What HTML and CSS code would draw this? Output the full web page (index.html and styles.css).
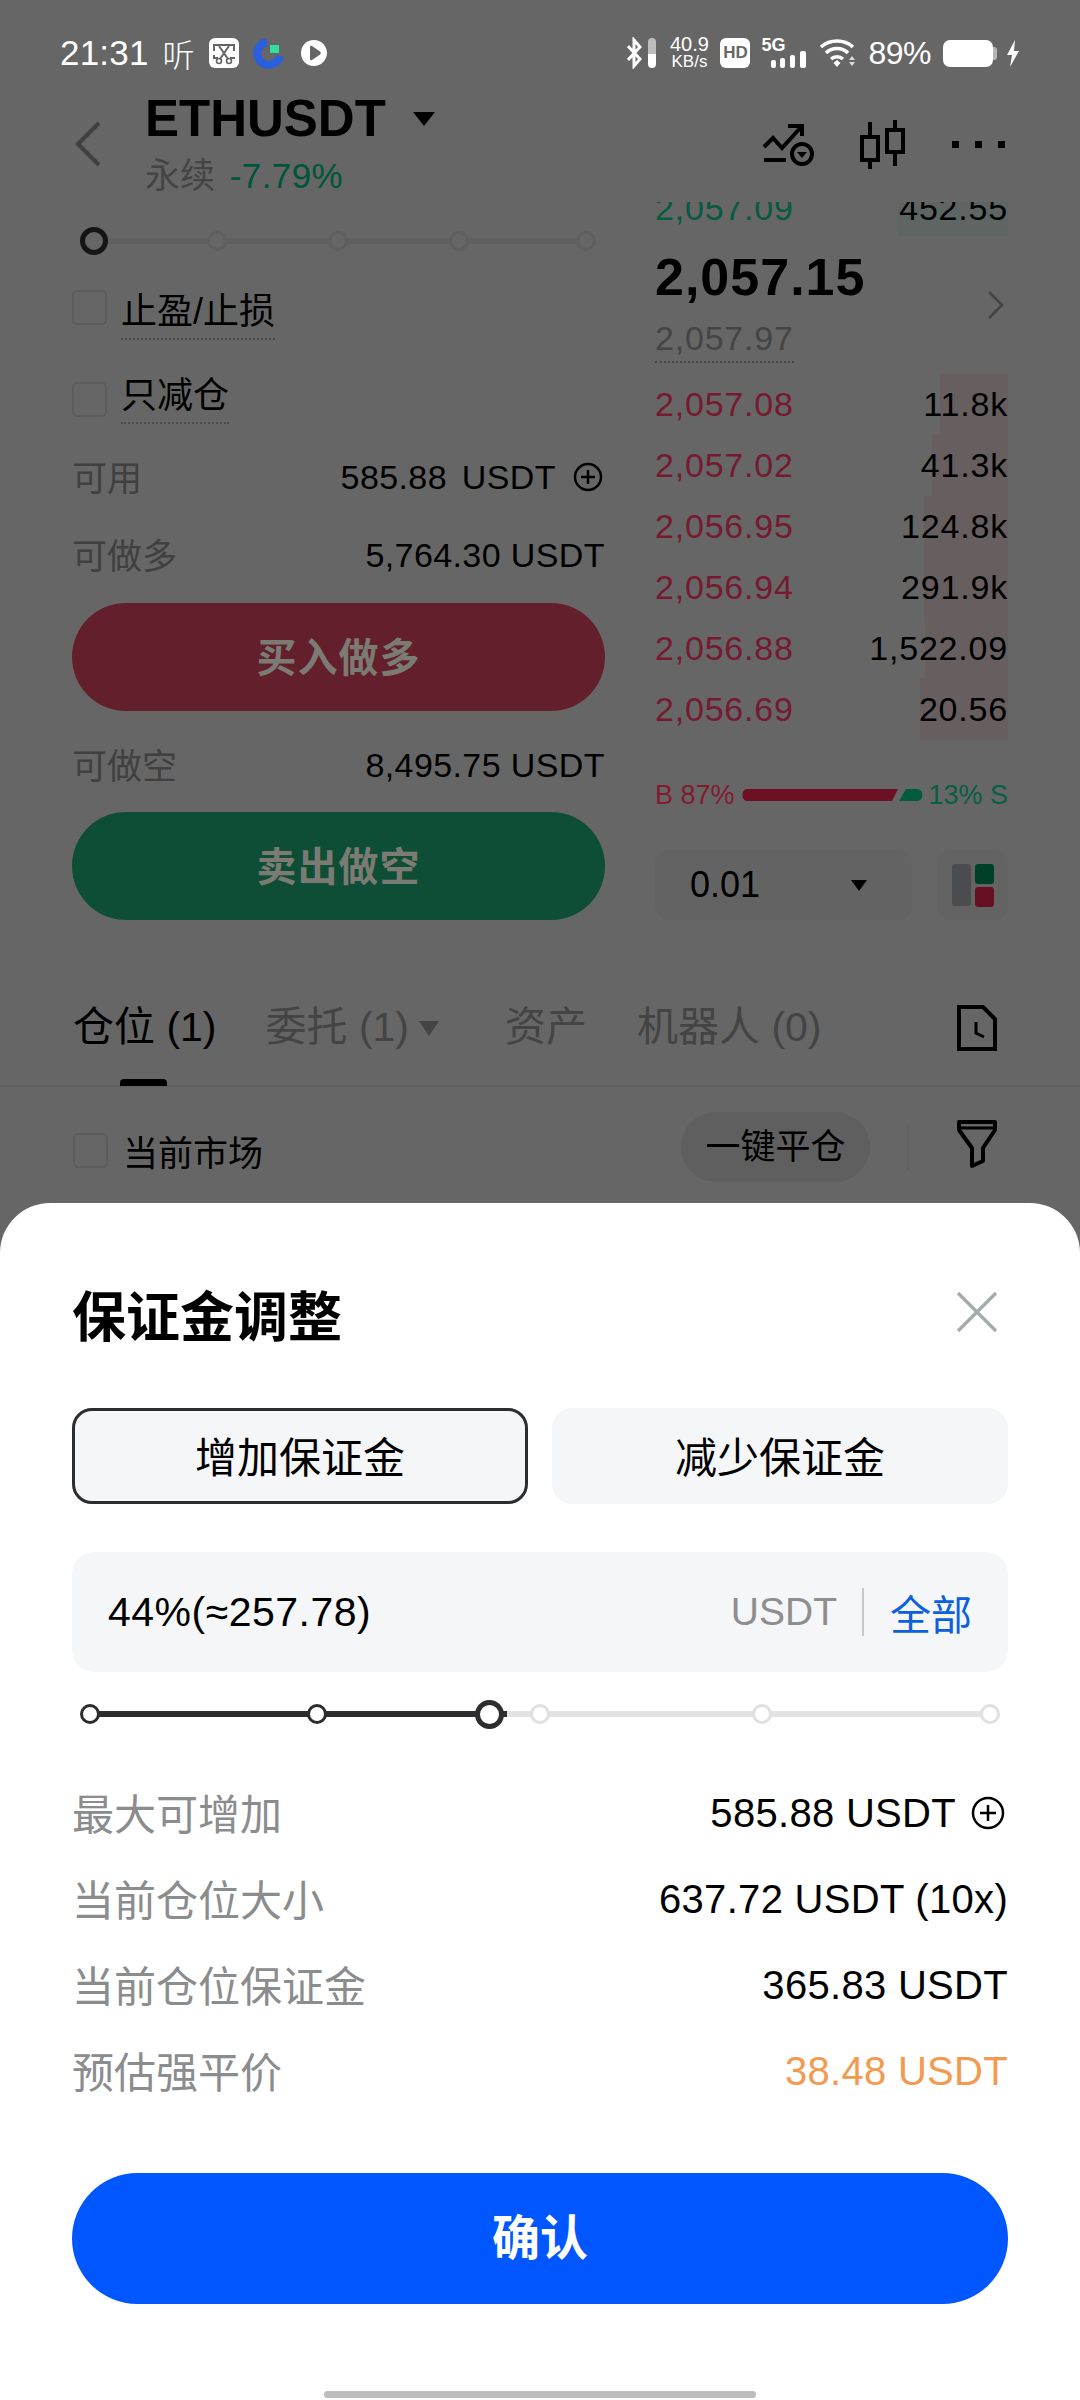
FILE: index.html
```html
<!DOCTYPE html>
<html lang="zh">
<head>
   <meta charset="utf-8" />
   <title>保证金调整</title>
   <link rel="stylesheet" href="styles.css">
</head>
<body>
<div class="page">
   <div class="status-bar">
       <span class="clock">21:31</span>
       <span class="listen">听</span>
       <svg class="st-icon st-clip" width="30" height="30" viewBox="0 0 30 30">
           <rect width="30" height="30" rx="6" fill="#fff"/>
           <path d="M5 13V7H25V13M25 19V20H21M9 20H5V17" fill="none" stroke="#666" stroke-width="2"/>
           <path d="M10 8L19 21M20 8L11 21" fill="none" stroke="#666" stroke-width="2"/>
           <circle cx="10" cy="23" r="2.5" fill="none" stroke="#666" stroke-width="1.6"/>
           <circle cx="20" cy="23" r="2.5" fill="none" stroke="#666" stroke-width="1.6"/>
       </svg>
       <svg class="st-icon st-gauge" width="32" height="32" viewBox="0 0 32 32">
           <path d="M14 5A11.500 11.500 0 1 0 27 19" fill="none" stroke="#2a5fe0" stroke-width="8"/>
           <rect x="17" y="8" width="9" height="8" fill="#2fe0a0"/>
       </svg>
       <svg class="st-icon st-play" width="28" height="28" viewBox="0 0 28 28">
           <path d="M14 1C22 1 27 8 27 14C27 20 22 27 14 27C6 27 1 21 1 14C1 7 6 1 14 1Z" fill="#fff"/>
           <path d="M10 8C10 7 11 6.500 12 7L20 12.500C21 13.400 21 14.600 20 15.500L12 21C11 21.500 10 21 10 20Z" fill="#666"/>
       </svg>

       <div class="status-right">
           <svg width="15" height="32" viewBox="0 0 15 32">
               <path d="M1 9L13 22L7 29V3L13 10L1 23" fill="none" stroke="#fff" stroke-width="3"/>
           </svg>
           <span class="bt-level"></span>
           <div class="speed"><span>40.9</span><span class="speed-unit">KB/s</span></div>
           <span class="hd">HD</span>
           <div class="net">
               <span class="net-label">5G</span>
               <svg width="35" height="17" viewBox="0 0 35 17">
                   <rect x="0" y="9" width="5" height="8" rx="2" fill="#fff"/>
                   <rect x="9" y="7" width="5" height="10" rx="2" fill="#fff"/>
                   <rect x="19" y="4" width="5" height="13" rx="2" fill="#fff"/>
                   <rect x="29" y="0" width="6" height="17" rx="2" fill="#fff"/>
               </svg>
           </div>
           <svg class="st-wifi" width="38" height="30" viewBox="0 0 38 30">
               <path d="M2 9C11 1 25 1 34 9M7 15C13 9 23 9 29 15M12 21C15.500 18 20.500 18 24 21" fill="none" stroke="#fff" stroke-width="3.600"/>
               <path d="M14.500 25L18 22L21.500 25L18 29Z" fill="#fff"/>
               <path d="M30 22L33 18L36 22ZM30 24L33 28L36 24Z" fill="#ddd"/>
           </svg>
           <span class="battery-pct">89%</span>
           <div class="battery"><span class="battery-cap"></span></div>
           <svg class="st-bolt" width="14" height="27" viewBox="0 0 14 27">
               <path d="M9 0L1 15H6L4 27L13 11H8Z" fill="#fff"/>
           </svg>
       </div>
   </div>

   <div class="top-bar">
       <svg class="back" width="26" height="46" viewBox="0 0 26 46">
           <path d="M24 2L3 23L24 44" fill="none" stroke="#3f3f3f" stroke-width="4"/>
       </svg>
       <div class="symbol-box">
           <div class="symbol">ETHUSDT <span class="caret caret-symbol"></span></div>
           <div class="symbol-sub">永续 <span class="change">-7.79%</span></div>
       </div>
       <div class="top-icons">
           <svg width="52" height="50" viewBox="0 0 52 50">
               <path d="M2 27L11 18L20 28L40 6M26 6H40V16" fill="none" stroke="#000" stroke-width="4"/>
               <path d="M2 40H24" stroke="#000" stroke-width="4"/>
               <circle cx="40" cy="34" r="10" fill="none" stroke="#000" stroke-width="4"/>
               <path d="M35 32H45L40 38Z" fill="#000"/>
           </svg>
           <svg width="46" height="50" viewBox="0 0 46 50">
               <path d="M10 2V49M35 0V46" stroke="#000" stroke-width="4"/>
               <rect x="2" y="17" width="16" height="23" fill="#666" stroke="#000" stroke-width="4"/>
               <rect x="27" y="10" width="16" height="22" fill="#666" stroke="#000" stroke-width="4"/>
           </svg>
           <div class="dots"><i></i><i></i><i></i></div>
       </div>
   </div>

   <div class="trade">
       <div class="order-form">
           <div class="slider dim">
               <div class="track"></div>
               <span class="knob big" style="left:22px"></span>
               <span class="knob" style="left:145px"></span>
               <span class="knob" style="left:266px"></span>
               <span class="knob" style="left:387px"></span>
               <span class="knob" style="left:514px"></span>
           </div>
           <div class="check-row first">
               <span class="box"></span>
               <span class="dotted">止盈/止损</span>
           </div>
           <div class="check-row second">
               <span class="box low"></span>
               <span class="dotted">只减仓</span>
           </div>
           <div class="info-row avail">
               <span class="muted">可用</span>
               <span class="info-value wide">
                   <span>585.88 USDT</span>
                   <svg class="plus" width="30" height="30" viewBox="0 0 30 30">
                       <circle cx="15" cy="15" r="13" fill="none" stroke="#000" stroke-width="2.500"/>
                       <path d="M15 8V22M8 15H22" stroke="#000" stroke-width="2.500"/>
                   </svg>
               </span>
           </div>
           <div class="info-row long">
               <span class="muted">可做多</span>
               <span class="info-value">5,764.30 USDT</span>
           </div>
           <div class="trade-btn buy">买入做多</div>
           <div class="info-row short">
               <span class="muted">可做空</span>
               <span class="info-value">8,495.75 USDT</span>
           </div>
           <div class="trade-btn sell">卖出做空</div>
       </div>

       <div class="book">
           <div class="clip-row">
               <div class="book-row ask-row">
                   <span class="depth depth-ask" style="width:110px"></span>
                   <span class="green">2,057.09</span><span>452.55</span>
               </div>
           </div>
           <div class="mid">
               <div>
                   <div class="mid-price">2,057.15</div>
                   <div class="mark-price"><span>2,057.97</span></div>
               </div>
               <svg width="18" height="30" viewBox="0 0 18 30">
                   <path d="M2 2L15 15L2 28" fill="none" stroke="#454545" stroke-width="2.600"/>
               </svg>
           </div>
           <div class="book-row"><span class="depth" style="width:68px"></span><span class="red">2,057.08</span><span>11.8k</span></div>
           <div class="book-row"><span class="depth" style="width:76px"></span><span class="red">2,057.02</span><span>41.3k</span></div>
           <div class="book-row"><span class="depth" style="width:84px"></span><span class="red">2,056.95</span><span>124.8k</span></div>
           <div class="book-row"><span class="depth" style="width:84px"></span><span class="red">2,056.94</span><span>291.9k</span></div>
           <div class="book-row"><span class="depth" style="width:83px"></span><span class="red">2,056.88</span><span>1,522.09</span></div>
           <div class="book-row"><span class="depth" style="width:88px"></span><span class="red">2,056.69</span><span>20.56</span></div>
           <div class="ratio">
               <span class="ratio-b">B 87%</span>
               <svg width="182" height="14" viewBox="0 0 182 14">
                   <path d="M6 1H157L151 13H6C0 13 0 1 6 1Z" fill="#6e1023"/>
                   <path d="M165 1H176C183 1 183 13 176 13H158Z" fill="#005c3d"/>
               </svg>
               <span class="ratio-s">13% S</span>
           </div>
           <div class="book-tools">
               <div class="depth-select"><span>0.01</span><span class="caret caret-small"></span></div>
               <div class="layout-btn">
                   <span class="lay-gray"></span>
                   <div class="lay-col"><span class="lay-green"></span><span class="lay-red"></span></div>
               </div>
           </div>
       </div>
   </div>

   <div class="tabs">
       <span class="tab active">仓位 (1)</span>
       <span class="tab tab-orders">委托 (1)</span><span class="caret caret-tab"></span>
       <span class="tab tab-assets">资产</span>
       <span class="tab tab-bots">机器人 (0)</span>
       <svg class="doc" width="42" height="48" viewBox="0 0 42 48">
           <path d="M3 3H27L39 15V45H3Z" fill="none" stroke="#000" stroke-width="4"/>
           <path d="M20 18V29L28 33" fill="none" stroke="#000" stroke-width="3"/>
       </svg>
   </div>
   <div class="filter-row">
       <div class="market-check">
           <span class="box"></span>
           <span>当前市场</span>
       </div>
       <div class="close-all">一键平仓</div>
       <span class="filter-sep"></span>
       <svg class="funnel" width="42" height="50" viewBox="0 0 42 50">
           <path d="M3 3H39V11L27 29V42L16 47V29L3 11Z" fill="none" stroke="#000" stroke-width="4" stroke-linejoin="round"/>
           <path d="M4 9H38" stroke="#000" stroke-width="3"/>
       </svg>
   </div>

   <div class="sheet">
       <div class="sheet-head">
           <span class="sheet-title">保证金调整</span>
           <svg class="sheet-close" width="42" height="42" viewBox="0 0 42 42">
               <path d="M2 2L40 40M40 2L2 40" stroke="#a8abad" stroke-width="3.500"/>
           </svg>
       </div>
       <div class="mode-tabs">
           <div class="mode-tab selected">增加保证金</div>
           <div class="mode-tab">减少保证金</div>
       </div>
       <div class="amount">
           <span class="amount-value">44%(≈257.78)</span>
           <span class="amount-unit">USDT</span>
           <span class="amount-sep"></span>
           <span class="amount-all">全部</span>
       </div>
       <div class="slider light">
           <div class="track"></div>
           <div class="track-fill" style="width:417px"></div>
           <span class="knob on" style="left:18px"></span>
           <span class="knob on" style="left:245px"></span>
           <span class="knob" style="left:468px"></span>
           <span class="knob" style="left:690px"></span>
           <span class="knob" style="left:918px"></span>
           <span class="knob big on" style="left:417px"></span>
       </div>
       <div class="detail-list">
           <div class="detail">
               <span class="detail-label">最大可增加</span>
               <span class="detail-value">
                   <span>585.88 USDT</span>
                   <svg class="plus" width="34" height="34" viewBox="0 0 34 34">
                       <circle cx="17" cy="17" r="15" fill="none" stroke="#000" stroke-width="2.500"/>
                       <path d="M17 9V25M9 17H25" stroke="#000" stroke-width="2.500"/>
                   </svg>
               </span>
           </div>
           <div class="detail">
               <span class="detail-label">当前仓位大小</span>
               <span class="detail-value">637.72 USDT (10x)</span>
           </div>
           <div class="detail">
               <span class="detail-label">当前仓位保证金</span>
               <span class="detail-value">365.83 USDT</span>
           </div>
           <div class="detail">
               <span class="detail-label">预估强平价</span>
               <span class="detail-value orange">38.48 USDT</span>
           </div>
       </div>
       <div class="confirm">确认</div>
       <div class="home-bar"></div>
   </div>
</div>
</body>
</html>
```

FILE: styles.css
```css
* {
    box-sizing: border-box;
}
html, body {
    margin: 0;
    width: 1080px;
    height: 2400px;
    overflow: hidden;
}
body {
    font-family: "Liberation Sans", "Noto Sans CJK SC", sans-serif;
    color: #000;
}
.page {
    position: relative;
    width: 1080px;
    height: 2400px;
    background: #666;
    overflow: hidden;
}

/* status bar */
.status-bar {
    height: 90px;
    padding: 16px 60px 0;
    display: flex;
    align-items: center;
    color: #fff;
}
.clock {
    font-size: 35px;
    letter-spacing: 0.2px;
}
.listen {
    font-size: 32px;
    font-weight: 300;
    margin-left: 14px;
}
.st-clip {
    margin-left: 14px;
}
.st-gauge {
    margin-left: 14px;
}
.st-play {
    margin-left: 15px;
}
.status-right {
    margin-left: auto;
    display: flex;
    align-items: center;
}
.bt-level {
    width: 8px;
    height: 30px;
    margin-left: 6px;
    border-radius: 4px;
    background: linear-gradient(#bdbdbd 55%, #fff 55%);
}
.speed {
    display: flex;
    flex-direction: column;
    align-items: center;
    width: 40px;
    margin-left: 13px;
    font-size: 20px;
    line-height: 17px;
}
.speed-unit {
    font-size: 17px;
}
.hd {
    width: 30px;
    height: 30px;
    margin-left: 11px;
    border-radius: 6px;
    background: #fff;
    color: #666;
    font-size: 17px;
    font-weight: bold;
    line-height: 30px;
    text-align: center;
}
.net {
    position: relative;
    width: 45px;
    height: 30px;
    margin-left: 11px;
    display: flex;
    justify-content: flex-end;
    align-items: flex-end;
}
.net-label {
    position: absolute;
    left: 0;
    top: 0;
    font-size: 18px;
    line-height: 15px;
    font-weight: bold;
}
.st-wifi {
    margin-left: 13px;
}
.battery-pct {
    margin-left: 11px;
    font-size: 32px;
    letter-spacing: -0.5px;
}
.battery {
    position: relative;
    width: 50px;
    height: 27px;
    margin-left: 12px;
    border-radius: 7px;
    background: #fff;
}
.battery-cap {
    position: absolute;
    left: 50px;
    top: 7px;
    width: 4px;
    height: 13px;
    border-radius: 0 3px 3px 0;
    background: #b5b5b5;
}
.st-bolt {
    margin-left: 13px;
}

/* symbol header */
.top-bar {
    height: 110px;
    padding: 0 75px;
    display: flex;
}
.back {
    margin-top: 31px;
}
.symbol-box {
    margin-left: 44px;
}
.symbol {
    padding-top: 1px;
    font-size: 51px;
    line-height: 56px;
    font-weight: bold;
    white-space: nowrap;
}
.caret {
    display: inline-block;
    width: 0;
    height: 0;
    border-style: solid;
    border-color: #000 transparent transparent;
}
.caret-symbol {
    border-width: 14px 11px 0;
    margin-left: 13px;
    vertical-align: 10px;
}
.symbol-sub {
    margin-top: 7px;
    font-size: 35px;
    line-height: 44px;
    color: #444;
}
.change {
    color: #00553a;
    margin-left: 5px;
    letter-spacing: 0.4px;
}
.top-icons {
    margin-left: auto;
    padding-top: 30px;
    height: 80px;
    display: flex;
    align-items: flex-start;
    gap: 46px;
}
.dots {
    display: flex;
    gap: 16px;
    margin-top: 21px;
}
.dots i {
    width: 7px;
    height: 7px;
    background: #000;
}

/* order form and book */
.trade {
    height: 720px;
    padding: 0 72px;
    display: flex;
    gap: 50px;
}
.order-form {
    width: 533px;
    flex: none;
}
.slider {
    position: relative;
    height: 82px;
}
.slider .track {
    position: absolute;
    left: 20px;
    right: 10px;
    top: 38px;
    height: 6px;
    background: #5e5f5f;
}
.knob {
    position: absolute;
    top: 41px;
    width: 20px;
    height: 20px;
    margin-left: -10px;
    margin-top: -10px;
    border: 3px solid #5e5f5f;
    border-radius: 50%;
    background: #666;
}
.knob.big {
    width: 28px;
    height: 28px;
    margin-left: -14px;
    margin-top: -14px;
    border: 5px solid #151515;
}
.check-row {
    display: flex;
    font-size: 36px;
    line-height: 44px;
}
.check-row.first {
    margin-top: 8px;
}
.check-row.second {
    margin-top: 34px;
}
.box {
    width: 35px;
    height: 35px;
    flex: none;
    border: 2px solid #5c5c5c;
    border-radius: 5px;
}
.box.low {
    margin-top: 8px;
}
.dotted {
    margin-left: 14px;
    padding-bottom: 4px;
    border-bottom: 2px dotted #4a4a4a;
}
.info-row {
    height: 50px;
    display: flex;
    justify-content: space-between;
    align-items: center;
}
.info-row.avail {
    margin-top: 28px;
}
.info-row.long {
    margin-top: 28px;
}
.info-row.short {
    margin-top: 29px;
}
.muted {
    margin-bottom: 4px;
    font-size: 35px;
    color: #404040;
}
.info-value {
    display: flex;
    align-items: center;
    font-size: 34px;
    letter-spacing: 0.4px;
}
.info-value.wide {
    word-spacing: 5px;
}
.info-value .plus {
    margin-left: 17px;
    margin-right: 2px;
}
.trade-btn {
    height: 108px;
    border-radius: 54px;
    color: #7b7b73;
    font-size: 40px;
    font-weight: bold;
    line-height: 110px;
    text-align: center;
    letter-spacing: 1px;
}
.buy {
    margin-top: 23px;
    background: #63202c;
}
.sell {
    margin-top: 22px;
    background: #0f4e36;
}
.book {
    flex: 1;
    min-width: 0;
}
.clip-row {
    height: 34px;
    margin-top: 2px;
    overflow: hidden;
}
.book-row {
    position: relative;
    height: 61px;
    display: flex;
    justify-content: space-between;
    align-items: center;
    font-size: 34px;
    letter-spacing: 0.8px;
}
.book-row span {
    position: relative;
}
.ask-row {
    margin-top: -27px;
    padding-top: 5px;
}
.book-row .depth {
    position: absolute;
    right: 0;
    top: 0;
    bottom: 0;
    background: #675e60;
}
.book-row .depth-ask {
    background: #5e6563;
}
.green {
    color: #085a40;
}
.red {
    color: #751a30;
}
.mid {
    height: 138px;
    display: flex;
    justify-content: space-between;
    align-items: center;
    padding-right: 3px;
}
.mid-price {
    font-size: 52px;
    line-height: 60px;
    font-weight: bold;
    letter-spacing: 1px;
}
.mark-price {
    margin-top: 9px;
    font-size: 34px;
    line-height: 44px;
    letter-spacing: 0.8px;
    color: #454545;
}
.mark-price span {
    display: inline-block;
    padding-bottom: 1px;
    border-bottom: 2px dotted #454545;
}
.ratio {
    height: 30px;
    margin-top: 40px;
    display: flex;
    justify-content: space-between;
    align-items: center;
    font-size: 27px;
}
.ratio-b {
    color: #831a32;
}
.ratio-s {
    color: #085e44;
}
.book-tools {
    height: 70px;
    margin-top: 40px;
    display: flex;
    gap: 25px;
}
.depth-select {
    flex: 1;
    padding: 0 45px 0 35px;
    display: flex;
    justify-content: space-between;
    align-items: center;
    border-radius: 14px;
    background: #636363;
    font-size: 36px;
}
.caret-small {
    border-width: 11px 8px 0;
}
.layout-btn {
    width: 71px;
    display: flex;
    justify-content: center;
    align-items: center;
    gap: 4px;
    border-radius: 14px;
    background: #636363;
}
.lay-gray {
    width: 19px;
    height: 42px;
    border-radius: 3px;
    background: #4a4c4e;
}
.lay-col {
    display: flex;
    flex-direction: column;
    gap: 3px;
}
.lay-green, .lay-red {
    width: 19px;
    height: 20px;
    border-radius: 3px;
    background: #004027;
}
.lay-red {
    background: #681022;
}

/* position tabs */
.tabs {
    height: 167px;
    padding: 84px 82px 0 73px;
    display: flex;
    align-items: flex-start;
    border-bottom: 2px solid #5f5f5f;
}
.tab {
    position: relative;
    font-size: 41px;
    line-height: 46px;
    color: #444;
    white-space: nowrap;
}
.tab.active {
    color: #000;
}
.tab.active::after {
    content: "";
    position: absolute;
    left: 47px;
    top: 75px;
    width: 47px;
    height: 7px;
    border-radius: 4px 4px 0 0;
    background: #000;
}
.tab-orders {
    margin-left: 49px;
}
.caret-tab {
    border-width: 15px 10px 0;
    border-top-color: #444;
    margin: 17px 0 0 10px;
}
.tab-assets {
    margin-left: 66px;
}
.tab-bots {
    margin-left: 50px;
}
.doc {
    margin-left: auto;
}
.filter-row {
    height: 70px;
    margin-top: 25px;
    padding: 0 82px 0 73px;
    display: flex;
    align-items: center;
}
.market-check {
    display: flex;
    align-items: center;
    gap: 15px;
    margin-top: 6px;
    font-size: 35px;
}
.close-all {
    margin-left: auto;
    width: 189px;
    height: 70px;
    border-radius: 35px;
    background: #5f5f5f;
    font-size: 35px;
    line-height: 70px;
    text-align: center;
}
.filter-sep {
    width: 2px;
    height: 45px;
    margin: 0 47px 0 37px;
    background: #616161;
}
.funnel {
    margin-top: -6px;
}

/* margin sheet */
.sheet {
    position: absolute;
    left: 0;
    right: 0;
    top: 1203px;
    bottom: 0;
    padding: 84px 72px 0;
    display: flex;
    flex-direction: column;
    border-radius: 50px 50px 0 0;
    background: #fff;
}
.sheet-head {
    height: 58px;
    padding-right: 10px;
    display: flex;
    justify-content: space-between;
    align-items: center;
}
.sheet-title {
    margin-top: 4px;
    font-size: 54px;
    line-height: 58px;
    font-weight: bold;
}
.sheet-close {
    margin-top: -8px;
}
.mode-tabs {
    margin-top: 63px;
    display: flex;
    gap: 24px;
}
.mode-tab {
    flex: 1;
    height: 96px;
    border: 3px solid #f4f6f8;
    border-radius: 20px;
    background: #f4f6f8;
    font-size: 42px;
    line-height: 95px;
    text-align: center;
}
.mode-tab.selected {
    border-color: #2b2d30;
}
.amount {
    height: 120px;
    margin-top: 48px;
    padding: 0 36px;
    display: flex;
    align-items: center;
    border-radius: 22px;
    background: #f4f6f8;
}
.amount-value {
    font-size: 41px;
    letter-spacing: 0.5px;
}
.amount-unit {
    margin-left: auto;
    font-size: 39px;
    color: #8e8e8e;
}
.amount-sep {
    width: 2px;
    height: 48px;
    margin: 0 26px 0 25px;
    background: #c9c9c9;
}
.amount-all {
    font-size: 41px;
    color: #0b5fe0;
}
.slider.light {
    height: 28px;
    margin-top: 28px;
}
.light .track {
    left: 18px;
    right: 18px;
    top: 11px;
    background: #e3e3e3;
}
.track-fill {
    position: absolute;
    left: 18px;
    top: 11px;
    height: 6px;
    background: #2d2d2f;
}
.light .knob {
    top: 14px;
    background: #fff;
    border-color: #e0e0e0;
}
.light .knob.on {
    border-color: #2d2d2f;
}
.light .knob.big {
    width: 29px;
    height: 29px;
    margin-left: -14px;
    margin-top: -14px;
    border-width: 5px;
}
.detail-list {
    margin-top: 42px;
}
.detail {
    height: 86px;
    display: flex;
    justify-content: space-between;
    align-items: center;
}
.detail-label {
    margin-bottom: 4px;
    font-size: 42px;
    color: #8a8c8e;
}
.detail-value {
    display: flex;
    align-items: center;
    font-size: 40px;
    letter-spacing: 0.3px;
}
.detail-value .plus {
    margin-left: 15px;
    margin-right: 3px;
}
.orange {
    color: #f29a50;
}
.confirm {
    height: 131px;
    margin-top: 59px;
    flex: none;
    border-radius: 66px;
    background: #0056ff;
    color: #fff;
    font-size: 48px;
    font-weight: bold;
    line-height: 131px;
    text-align: center;
}
.home-bar {
    width: 432px;
    height: 7px;
    margin: 87px auto 0;
    flex: none;
    border-radius: 4px;
    background: #bdbdbd;
}
```
